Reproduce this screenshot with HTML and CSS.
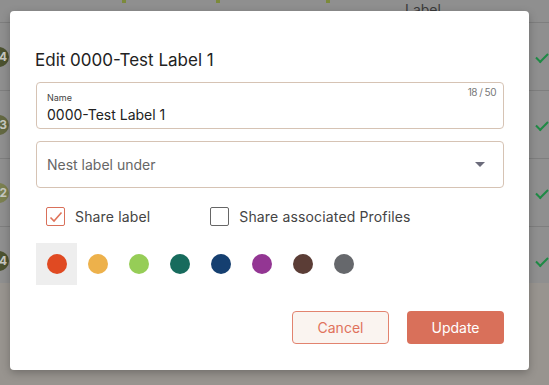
FILE: index.html
```html
<!DOCTYPE html>
<html lang="en">
<head>
  <meta charset="UTF-8">
  <meta name="viewport" content="width=device-width, initial-scale=1.0">
  <title>Edit label</title>
  <link rel="stylesheet" href="styles.css">
</head>
<body>
  <div class="page">
    <div class="table">
      <div class="table-head">
        <span class="head-mark m1"></span>
        <span class="head-mark m2"></span>
        <span class="head-mark m3"></span>
        <span class="head-title">Label</span>
      </div>
      <div class="row"><span class="badge b4">4</span><span class="check"></span></div>
      <div class="row"><span class="badge b3">3</span><span class="check"></span></div>
      <div class="row"><span class="badge b2">2</span><span class="check"></span></div>
      <div class="row last"><span class="badge b4">4</span><span class="check"></span></div>
    </div>
  </div>

  <div class="overlay">
    <div class="dialog">
      <h2>Edit 0000-Test Label 1</h2>

      <div class="field">
        <label class="field-label" for="name">Name</label>
        <span class="counter">18 / 50</span>
        <input type="text" id="name" value="0000-Test Label 1">
      </div>

      <div class="field select">
        <span class="placeholder">Nest label under</span>
        <span class="caret"></span>
      </div>

      <div class="checks">
        <label class="checkbox">
          <span class="box checked">
            <svg width="14" height="12" viewBox="0 0 14 12"><path d="M1.5 6.5 L5 10 L12.5 1.5" fill="none" stroke="#e0745a" stroke-width="1.6"/></svg>
          </span>
          Share label
        </label>
        <label class="checkbox">
          <span class="box"></span>
          Share associated Profiles
        </label>
      </div>

      <div class="swatches">
        <span class="swatch active"><i style="background:#e04a22"></i></span>
        <span class="swatch"><i style="background:#edb14b"></i></span>
        <span class="swatch"><i style="background:#96cd57"></i></span>
        <span class="swatch"><i style="background:#176b5d"></i></span>
        <span class="swatch"><i style="background:#153f70"></i></span>
        <span class="swatch"><i style="background:#933693"></i></span>
        <span class="swatch"><i style="background:#5b3d36"></i></span>
        <span class="swatch"><i style="background:#66686c"></i></span>
      </div>

      <div class="actions">
        <button class="btn cancel">Cancel</button>
        <button class="btn update">Update</button>
      </div>
    </div>
  </div>
</body>
</html>
```

FILE: styles.css
```css
:root {
  --accent: #d9705a;
  --accent-text: #e0725c;
  --border: #d6c3b4;
  --text: #222;
  --muted: #666;
}

body {
  margin: 0;
  width: 549px;
  height: 385px;
  overflow: hidden;
  position: relative;
  font-family: Inter, "Open Sans", sans-serif;
  background-color: #98948f;
  color: var(--text);
}

.table {
  background-color: #8f8f8f;
  height: 283px;
}

.table-head {
  position: relative;
  height: 22px;
  border-bottom: 1px solid #7e7e7e;
}

.head-mark {
  position: absolute;
  top: 0;
  width: 4px;
  height: 3px;
  background-color: #7c8a3a;
}

.m1 { left: 122px; }
.m2 { left: 216px; }
.m3 { left: 326px; }

.head-title {
  position: absolute;
  left: 405px;
  top: 1px;
  font-size: 14px;
  color: #3a3a3a;
}

.row {
  height: 67px;
  border-bottom: 1px solid #7e7e7e;
  display: flex;
  align-items: center;
  justify-content: space-between;
}

.row.last {
  border-bottom: none;
}

.badge {
  width: 20px;
  height: 20px;
  margin-left: -11px;
  border-radius: 50%;
  display: flex;
  align-items: center;
  justify-content: flex-end;
  padding-right: 2px;
  box-sizing: border-box;
  font-size: 12px;
  font-weight: bold;
  color: #c8c8c0;
}

.b4 { background-color: #4c5230; }
.b3 { background-color: #636842; }
.b2 { background-color: #7b8050; }

.check {
  width: 10px;
  height: 5px;
  margin-right: 1px;
  border-left: 2px solid #1f8a45;
  border-bottom: 2px solid #1f8a45;
  transform: rotate(-45deg);
}

.overlay {
  position: absolute;
  top: 0;
  left: 0;
  right: 0;
  bottom: 0;
}

.dialog {
  position: absolute;
  left: 10px;
  top: 11px;
  width: 519px;
  height: 359px;
  box-sizing: border-box;
  padding: 38px 25px 0 26px;
  background-color: white;
  border-radius: 4px;
  box-shadow: 0 3px 8px rgba(0, 0, 0, 0.25);
}

h2 {
  margin: 0 0 11px -1px;
  font-size: 17px;
  font-weight: normal;
  line-height: 22px;
}

.field {
  position: relative;
  height: 47px;
  border: 1px solid var(--border);
  border-radius: 4px;
  box-sizing: border-box;
  margin-bottom: 12px;
}

.field-label {
  position: absolute;
  left: 10px;
  top: 9px;
  font-size: 9px;
  color: #444;
}

.counter {
  position: absolute;
  right: 7px;
  top: 3px;
  font-size: 10px;
  letter-spacing: -0.5px;
  color: #777;
}

.field input {
  position: absolute;
  left: 10px;
  top: 23px;
  width: 420px;
  padding: 0;
  border: none;
  outline: none;
  font-family: inherit;
  font-size: 14px;
  color: var(--text);
  background: none;
}

.select {
  display: flex;
  align-items: center;
  justify-content: space-between;
  padding: 0 18px 0 10px;
}

.placeholder {
  font-size: 14px;
  color: var(--muted);
}

.caret {
  width: 0;
  height: 0;
  border-left: 5px solid transparent;
  border-right: 5px solid transparent;
  border-top: 5px solid #6b6b7b;
}

.checks {
  display: flex;
  gap: 60px;
  margin: 19px 0 0 10px;
}

.checkbox {
  display: flex;
  align-items: center;
  gap: 10px;
  font-size: 14px;
  letter-spacing: 0.15px;
  color: #444;
}

.box {
  width: 19px;
  height: 19px;
  box-sizing: border-box;
  border: 1px solid #666;
  border-radius: 2px;
  display: flex;
  align-items: center;
  justify-content: center;
}

.box.checked {
  border-color: var(--accent);
}

.swatches {
  display: flex;
  margin-top: 17px;
}

.swatch {
  width: 41px;
  height: 42px;
  display: flex;
  align-items: center;
  justify-content: center;
}

.swatch.active {
  background-color: #eeeeee;
}

.swatch i {
  width: 20px;
  height: 20px;
  border-radius: 50%;
}

.actions {
  display: flex;
  justify-content: flex-end;
  gap: 18px;
  margin-top: 26px;
}

.btn {
  width: 97px;
  height: 33px;
  border-radius: 4px;
  font-family: inherit;
  font-size: 14px;
  cursor: pointer;
}

.cancel {
  background-color: #faf4f0;
  border: 1px solid #e2836f;
  color: var(--accent-text);
}

.update {
  background-color: var(--accent);
  border: none;
  color: white;
}
```
